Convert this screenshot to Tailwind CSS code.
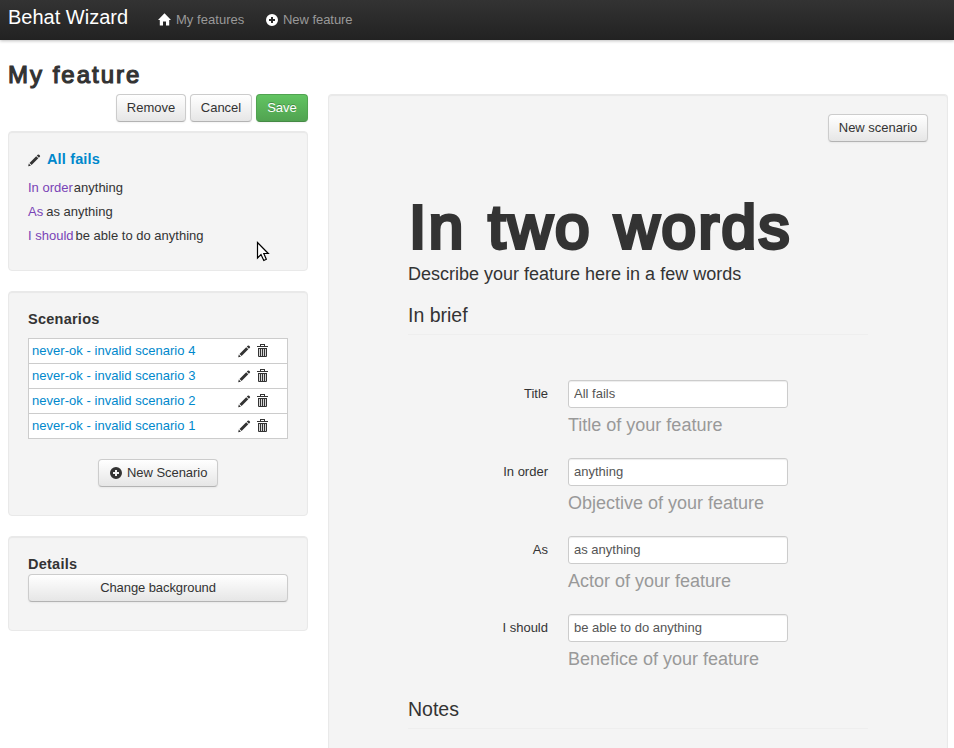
<!DOCTYPE html>
<html lang="en">
<head>
<meta charset="utf-8">
<title>Behat Wizard</title>
<script src="https://cdn.jsdelivr.net/npm/@tailwindcss/browser@4"></script>
</head>
<body class="h-[748px] overflow-hidden bg-white font-['Liberation_Sans',Arial,sans-serif] text-[13px] leading-[18px] text-[#333]">
<svg class="hidden">
  <symbol id="pencil" viewBox="0 0 13 13"><path d="M.2 12.3.8 9.6 2.9 11.7ZM1.5 8.9 8.2 2.2 10.3 4.3 3.6 11ZM8.8 1.6 9.7.7Q10.4.1 11.1.7L11.9 1.5Q12.5 2.2 11.8 2.8L10.9 3.7Z"/></symbol>
  <symbol id="trash" viewBox="0 0 11 13"><path fill-rule="evenodd" d="M0 2H3V0H8V2H11V3H0ZM4 2H7V1H4ZM1 4H10V12Q10 13 9 13H2Q1 13 1 12ZM2.2 5V12H3V5ZM4.2 5V12H5V5ZM6.1 5V12H6.9V5ZM8 5V12H8.8V5Z"/></symbol>
  <symbol id="plus" viewBox="0 0 12 12"><path fill-rule="evenodd" d="M6 0A6 6 0 1 1 6 12A6 6 0 1 1 6 0ZM5 3V5H3V7H5V9H7V7H9V5H7V3Z"/></symbol>
  <symbol id="home" viewBox="0 0 13 13"><path d="M6.5.2 13 7H11.2V12.5H8V8.5H5V12.5H1.8V7H0Z"/></symbol>
</svg>

<header class="flex h-10 items-start bg-linear-to-b from-[#333] to-[#222] pl-2 text-[#999] shadow-[0_1px_3px_rgba(0,0,0,.25)]">
  <a class="mt-[7px] w-[150px] text-[20px] leading-5 text-white">Behat Wizard</a>
  <a class="mt-[11px] flex w-[108px] tracking-[.04px]"><svg class="mt-[2px] mr-[5px] h-[13px] w-[13px] fill-white"><use href="#home"/></svg>My features</a>
  <a class="mt-[11px] flex tracking-[-.05px]"><svg class="mt-[3px] mr-[5px] h-3 w-3 fill-white"><use href="#plus"/></svg>New feature</a>
</header>

<h1 class="mt-[16px] ml-2 h-[38px] text-[24px] leading-[37px] tracking-[2px] [-webkit-text-stroke:1.2px_#333]">My feature</h1>

<div class="flex items-start gap-5 pl-2">
  <aside class="w-[300px]">
    <div class="mb-[9px] flex justify-end gap-1">
      <button class="h-7 w-[70px] rounded border border-[#ccc] border-b-[#b3b3b3] bg-linear-to-b from-white to-[#e6e6e6] pb-px shadow-[0_1px_2px_rgba(0,0,0,.05)]">Remove</button>
      <button class="h-7 w-[62px] rounded border border-[#ccc] border-b-[#b3b3b3] bg-linear-to-b from-white to-[#e6e6e6] pb-px shadow-[0_1px_2px_rgba(0,0,0,.05)]">Cancel</button>
      <button class="h-7 w-[52px] rounded border border-[#51a351] border-b-[#458a45] bg-linear-to-b from-[#62c462] to-[#51a351] pb-px text-white shadow-[0_1px_2px_rgba(0,0,0,.05)] text-shadow-[0_-1px_0_rgba(0,0,0,.25)]">Save</button>
    </div>

    <section class="mb-5 h-[140px] rounded border border-[#e9e9e9] bg-[#f4f4f4] px-[19px] pt-[18px] shadow-[inset_0_1px_1px_rgba(0,0,0,.05)]">
      <h2 class="flex h-[26px] text-[14.5px] font-bold tracking-[.15px] text-[#08c]"><svg class="mt-[4px] mr-[6px] h-[13px] w-[13px] fill-[#333]"><use href="#pencil"/></svg>All fails</h2>
      <p class="flex gap-px leading-6"><span class="text-[#7943b6]">In order</span><span>anything</span></p>
      <p class="flex gap-[3px] leading-6"><span class="text-[#7943b6]">As</span><span>as anything</span></p>
      <p class="flex gap-[2px] leading-6"><span class="text-[#7943b6]">I should</span><span>be able to do anything</span></p>
    </section>

    <section class="mb-5 h-[225px] rounded border border-[#e9e9e9] bg-[#f4f4f4] px-[19px] pt-[18px] shadow-[inset_0_1px_1px_rgba(0,0,0,.05)]">
      <h2 class="h-7 text-[14.5px] font-bold tracking-[.25px]">Scenarios</h2>
      <ul class="divide-y divide-[#ccc] border border-[#ccc] bg-white text-[#08c]">
        <li class="flex h-[25px] pt-[3px] pl-[3px]"><a class="w-[206px] tracking-[.03px]">never-ok - invalid scenario 4</a><svg class="mt-[3px] mr-[6px] h-[13px] w-[13px] fill-[#333]"><use href="#pencil"/></svg><svg class="mt-[2px] h-[13px] w-[11px] fill-[#333]"><use href="#trash"/></svg></li>
        <li class="flex h-[25px] pt-[3px] pl-[3px]"><a class="w-[206px] tracking-[.03px]">never-ok - invalid scenario 3</a><svg class="mt-[3px] mr-[6px] h-[13px] w-[13px] fill-[#333]"><use href="#pencil"/></svg><svg class="mt-[2px] h-[13px] w-[11px] fill-[#333]"><use href="#trash"/></svg></li>
        <li class="flex h-[25px] pt-[3px] pl-[3px]"><a class="w-[206px] tracking-[.03px]">never-ok - invalid scenario 2</a><svg class="mt-[3px] mr-[6px] h-[13px] w-[13px] fill-[#333]"><use href="#pencil"/></svg><svg class="mt-[2px] h-[13px] w-[11px] fill-[#333]"><use href="#trash"/></svg></li>
        <li class="flex h-6 pt-[3px] pl-[3px]"><a class="w-[206px] tracking-[.03px]">never-ok - invalid scenario 1</a><svg class="mt-[3px] mr-[6px] h-[13px] w-[13px] fill-[#333]"><use href="#pencil"/></svg><svg class="mt-[2px] h-[13px] w-[11px] fill-[#333]"><use href="#trash"/></svg></li>
      </ul>
      <button class="mx-auto mt-5 flex h-7 w-[120px] items-center gap-[5px] rounded border border-[#ccc] border-b-[#b3b3b3] bg-linear-to-b from-white to-[#e6e6e6] pb-px pl-[11px] tracking-[-.05px] whitespace-nowrap shadow-[0_1px_2px_rgba(0,0,0,.05)]"><svg class="mt-px h-3 w-3 fill-[#333]"><use href="#plus"/></svg>New Scenario</button>
    </section>

    <section class="h-[95px] rounded border border-[#e9e9e9] bg-[#f4f4f4] px-[19px] pt-[18px] shadow-[inset_0_1px_1px_rgba(0,0,0,.05)]">
      <h2 class="h-[19px] text-[14.5px] font-bold tracking-[.25px]">Details</h2>
      <button class="h-7 w-full rounded border border-[#ccc] border-b-[#b3b3b3] bg-linear-to-b from-white to-[#e6e6e6] pb-px tracking-[-.08px] shadow-[0_1px_2px_rgba(0,0,0,.05)]">Change background</button>
    </section>
  </aside>

  <main class="h-[654px] w-[620px] rounded-t border border-b-0 border-[#e9e9e9] bg-[#f4f4f4] px-[19px] pt-[19px] shadow-[inset_0_1px_1px_rgba(0,0,0,.05)]">
    <div class="flex justify-end">
      <button class="h-7 w-[100px] rounded border border-[#ccc] border-b-[#b3b3b3] bg-linear-to-b from-white to-[#e6e6e6] pb-px tracking-[-.03px] shadow-[0_1px_2px_rgba(0,0,0,.05)]">New scenario</button>
    </div>
    <div class="px-[60px] pt-[55px]">
      <h1 class="h-[64px] pl-px text-[62px] leading-[60px] tracking-[2.4px] whitespace-nowrap [word-spacing:3px] [-webkit-text-stroke:3.8px_#333]">In two words</h1>
      <p class="h-[35px] text-[18px] leading-[27px]">Describe your feature here in a few words</p>
      <h2 class="mb-[45px] h-[39px] border-b border-[#eee] text-[19.5px] leading-[38px]">In brief</h2>
      <form>
        <div class="flex h-[78px] gap-5"><label class="w-[140px] pt-[5px] text-right">Title</label><div class="w-[220px]"><input class="block h-7 w-full rounded-[3px] border border-[#ccc] bg-white px-[5px] pb-px text-[#555] shadow-[inset_0_1px_1px_rgba(0,0,0,.075)]" value="All fails"><p class="mt-[8px] text-[18px] leading-[18px] whitespace-nowrap text-[#999]">Title of your feature</p></div></div>
        <div class="flex h-[78px] gap-5"><label class="w-[140px] pt-[5px] text-right">In order</label><div class="w-[220px]"><input class="block h-7 w-full rounded-[3px] border border-[#ccc] bg-white px-[5px] pb-px text-[#555] shadow-[inset_0_1px_1px_rgba(0,0,0,.075)]" value="anything"><p class="mt-[8px] text-[18px] leading-[18px] whitespace-nowrap text-[#999]">Objective of your feature</p></div></div>
        <div class="flex h-[78px] gap-5"><label class="w-[140px] pt-[5px] text-right">As</label><div class="w-[220px]"><input class="block h-7 w-full rounded-[3px] border border-[#ccc] bg-white px-[5px] pb-px text-[#555] shadow-[inset_0_1px_1px_rgba(0,0,0,.075)]" value="as anything"><p class="mt-[8px] text-[18px] leading-[18px] whitespace-nowrap text-[#999]">Actor of your feature</p></div></div>
        <div class="flex h-[76px] gap-5"><label class="w-[140px] pt-[5px] text-right">I should</label><div class="w-[220px]"><input class="block h-7 w-full rounded-[3px] border border-[#ccc] bg-white px-[5px] pb-px text-[#555] shadow-[inset_0_1px_1px_rgba(0,0,0,.075)]" value="be able to do anything"><p class="mt-[8px] text-[18px] leading-[18px] whitespace-nowrap text-[#999]">Benefice of your feature</p></div></div>
      </form>
      <h2 class="h-[39px] border-b border-[#eee] text-[19.5px] leading-[38px]">Notes</h2>
    </div>
  </main>
</div>

<svg class="absolute top-[241px] left-[256px] h-[21px] w-[14px]" viewBox="0 0 14 21"><path d="M1.5 1.5V17L5 13.6 7.8 19.5 10.3 18.3 7.8 12.5H12.3Z" fill="#fff" stroke="#000" stroke-width="1.2"/></svg>
</body>
</html>
